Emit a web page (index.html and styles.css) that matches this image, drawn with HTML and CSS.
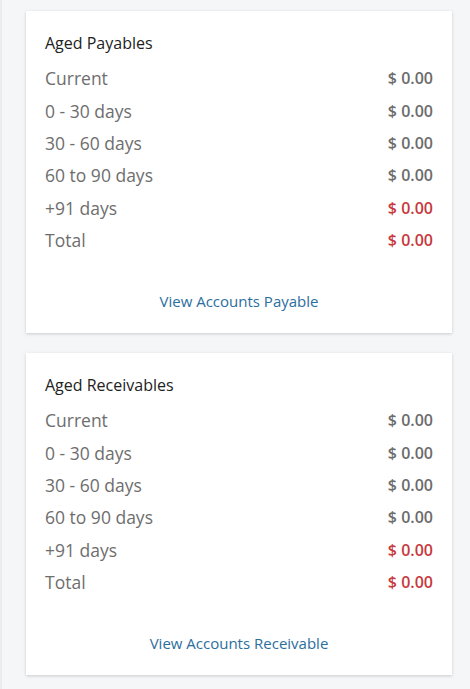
FILE: index.html
```html
<!DOCTYPE html>
<html>
<head>
<meta charset="utf-8">
<link rel="stylesheet" href="styles.css">
</head>
<body>
<div class="page">
  <section class="card">
    <h2 class="card-title">Aged Payables</h2>
    <ul class="rows">
      <li class="row"><span class="label">Current</span><span class="amount">$ 0.00</span></li>
      <li class="row"><span class="label">0 - 30 days</span><span class="amount">$ 0.00</span></li>
      <li class="row"><span class="label">30 - 60 days</span><span class="amount">$ 0.00</span></li>
      <li class="row"><span class="label">60 to 90 days</span><span class="amount">$ 0.00</span></li>
      <li class="row"><span class="label">+91 days</span><span class="amount negative">$ 0.00</span></li>
      <li class="row"><span class="label">Total</span><span class="amount negative">$ 0.00</span></li>
    </ul>
    <a class="card-link" href="#">View Accounts Payable</a>
  </section>
  <section class="card">
    <h2 class="card-title">Aged Receivables</h2>
    <ul class="rows">
      <li class="row"><span class="label">Current</span><span class="amount">$ 0.00</span></li>
      <li class="row"><span class="label">0 - 30 days</span><span class="amount">$ 0.00</span></li>
      <li class="row"><span class="label">30 - 60 days</span><span class="amount">$ 0.00</span></li>
      <li class="row"><span class="label">60 to 90 days</span><span class="amount">$ 0.00</span></li>
      <li class="row"><span class="label">+91 days</span><span class="amount negative">$ 0.00</span></li>
      <li class="row"><span class="label">Total</span><span class="amount negative">$ 0.00</span></li>
    </ul>
    <a class="card-link" href="#">View Accounts Receivable</a>
  </section>
</div>
</body>
</html>
```

FILE: styles.css
```css
html, body {
  margin: 0;
  padding: 0;
  background: #f5f6f8;
  font-family: "Open Sans", "Liberation Sans", sans-serif;
}
.page {
  border-left: 2px solid #eaecef;
  min-height: 689px;
  box-sizing: border-box;
  padding: 11px 18px 0 24px;
  display: flex;
  flex-direction: column;
  gap: 20px;
}
.card {
  background: #fff;
  box-shadow: 0 1px 3px rgba(0, 0, 0, 0.18);
  padding: 21px 19px 0 19px;
  height: 322px;
  box-sizing: border-box;
  display: flex;
  flex-direction: column;
}
.card-title {
  margin: 0 0 8px 0;
  font-size: 16px;
  font-weight: 400;
  color: #222;
  line-height: 22px;
}
.rows {
  list-style: none;
  margin: 0;
  padding: 0;
}
.row {
  display: flex;
  justify-content: space-between;
  align-items: center;
  height: 32.4px;
}
.label {
  font-size: 17.5px;
  color: #6e6e6e;
}
.amount {
  font-size: 16px;
  font-weight: 600;
  color: #6b6b6b;
}
.amount.negative {
  color: #c8383c;
}
.card-link {
  margin-top: 35px;
  align-self: center;
  font-size: 15px;
  color: #2b6e9e;
  text-decoration: none;
}
```
